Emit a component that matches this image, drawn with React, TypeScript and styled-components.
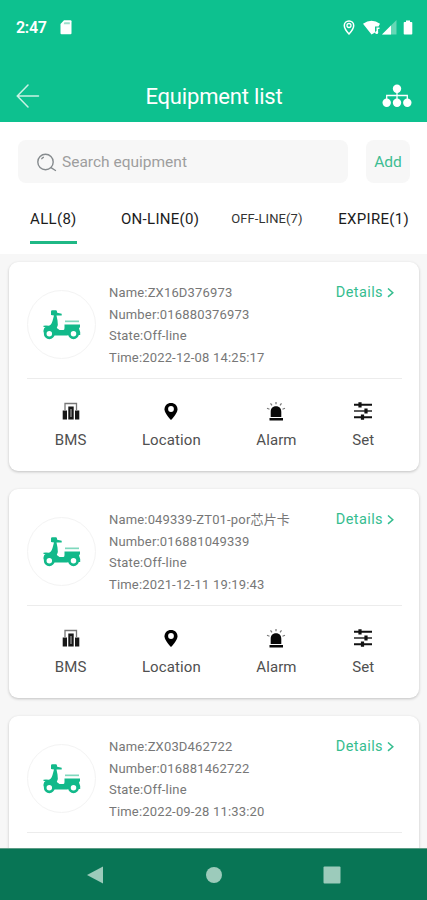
import React from "react";
import styled, { createGlobalStyle } from "styled-components";

const Global = createGlobalStyle`
  * { box-sizing: border-box; }
  html, body { margin: 0; padding: 0; overflow: hidden; }
  body { font-family: Roboto, "Noto Sans CJK SC", sans-serif; background: #f7f7f7; }
  svg { display: block; flex: none; }
  button { font: inherit; border: 0; padding: 0; background: none; }
`;

const Screen = styled.div`
  width: 427px;
  height: 900px;
  display: flex;
  flex-direction: column;
  overflow: hidden;
  background: #f7f7f7;
`;

const Header = styled.header`
  flex: none;
  height: 122px;
  background: #0dc18f;
  color: #fff;
  box-shadow: 0 1px 1px #b9d9ce;
`;

const StatusBar = styled.div`
  height: 55px;
  padding: 0 14px 0 16px;
  display: flex;
  align-items: center;
`;

const Clock = styled.span`
  width: 44px;
  font-size: 16px;
  font-weight: 600;
  line-height: 20px;
  letter-spacing: -0.3px;
  padding-top: 1px;
`;

const StatusIcons = styled.div`
  margin-left: auto;
  display: flex;
  align-items: center;
`;

const TitleBar = styled.div`
  height: 67px;
  padding: 14px 15px 0 16px;
  display: flex;
  align-items: center;
  justify-content: space-between;
`;

const Title = styled.h1`
  margin: 0;
  padding-top: 3px;
  font-size: 22px;
  font-weight: 400;
  line-height: 30px;
  letter-spacing: -0.18px;
`;

const Filters = styled.section`
  flex: none;
  height: 132px;
  padding-top: 18px;
  background: #fff;
`;

const SearchRow = styled.div`
  display: flex;
  gap: 18px;
  padding: 0 17px 0 18px;
  height: 43px;
`;

const SearchBox = styled.div`
  width: 330px;
  border-radius: 8px;
  background: #f7f7f7;
  display: flex;
  align-items: center;
  gap: 5px;
  padding-left: 18px;
  padding-top: 1px;
  font-size: 15.5px;
  color: #9e9e9e;
`;

const AddButton = styled.button`
  width: 44px;
  padding-top: 1px;
  border-radius: 8px;
  background: #f7f7f7;
  color: #3dbd92;
  font-size: 15.5px;
`;

const Tabs = styled.nav`
  display: grid;
  grid-template-columns: repeat(4, 1fr);
  height: 61px;
  padding-top: 25px;
`;

const Tab = styled.div<{ $active?: boolean; $small?: boolean }>`
  justify-self: center;
  height: 36px;
  line-height: 22px;
  font-size: ${(p) => (p.$small ? 13 : 15)}px;
  font-weight: ${(p) => (p.$small ? 400 : 450)};
  letter-spacing: ${(p) => (p.$small ? 0.1 : 0.3)}px;
  color: ${(p) => (p.$small ? "#333" : "#1c1c1c")};
  border-bottom: 3px solid ${(p) => (p.$active ? "#1fb885" : "transparent")};
  white-space: nowrap;
`;

const List = styled.main`
  flex: 1;
  min-height: 0;
  overflow: hidden;
  padding: 8px 8px 0 9px;
  display: flex;
  flex-direction: column;
  gap: 18px;
`;

const Card = styled.article`
  flex: none;
  height: 209px;
  padding: 0 17px 0 18px;
  background: #fff;
  border-radius: 9px;
  box-shadow: 0 1px 3px rgba(0, 0, 0, 0.22);
`;

const Summary = styled.div`
  display: flex;
  height: 117px;
  border-bottom: 1px solid #ececec;
  padding-top: 20px;
`;

const Avatar = styled.div`
  width: 69px;
  height: 69px;
  margin-top: 8px;
  border: 1px solid #f3f3f3;
  border-radius: 50%;
  display: flex;
  align-items: center;
  justify-content: center;
`;

const Facts = styled.div`
  margin-left: 13px;
  font-size: 13px;
  color: #777;
`;

const Fact = styled.div`
  height: 21.7px;
  line-height: 21.7px;
  letter-spacing: 0.17px;
  white-space: nowrap;
`;

const Details = styled.a`
  margin-left: auto;
  margin-right: 8px;
  height: 21px;
  display: flex;
  align-items: center;
  gap: 4px;
  font-size: 14.5px;
  letter-spacing: 0.4px;
  color: #35bd8f;
`;

const Actions = styled.div`
  display: flex;
  justify-content: space-around;
  padding-top: 22px;
`;

const Action = styled.div`
  display: flex;
  flex-direction: column;
  align-items: center;
  gap: 9px;
  font-size: 15px;
  line-height: 20px;
  letter-spacing: 0.1px;
  color: #505050;
`;

const NavBar = styled.footer`
  flex: none;
  height: 52px;
  border-top: 1px solid #5d9c85;
  background: #087555;
  display: flex;
  align-items: center;
  justify-content: space-between;
  padding: 0 86px;
`;

const BackArrow = () => (
  <svg width="30" height="24" viewBox="0 0 30 24" fill="none" stroke="#c9f2e4" strokeWidth="1.5" strokeLinecap="round">
    <path d="M12 1 1.3 12 12 23M1.5 12H22.5" />
  </svg>
);

const Org = () => (
  <svg width="30" height="24" viewBox="0 0 30 24" fill="#fff">
    <path d="M15 5v13M4.700 17v-5.500h20.600V17" fill="none" stroke="#fff" strokeWidth="1.3" />
    <circle cx="15" cy="4.700" r="4.2" />
    <circle cx="4.700" cy="18.7" r="4.2" />
    <circle cx="15" cy="18.7" r="4.2" />
    <circle cx="25.300" cy="18.7" r="4.2" />
  </svg>
);

const SdCard = () => (
  <svg width="12" height="15" viewBox="0 0 12 15">
    <path d="M4 .3h6.500q1 0 1 1v12q0 1-1 1h-9q-1 0-1-1V4z" fill="#fff" />
    <path d="M4.3 2.2h5.5v2H3.7z" fill="#9adfca" />
  </svg>
);

const StatusGlyphs = () => (
  <svg width="70" height="16" viewBox="0 0 70 16">
    <path d="M6 1C3.3 1 1.3 3 1.3 5.5 1.3 9 6 14 6 14s4.700-5 4.700-8.500C10.700 3 8.700 1 6 1Z" fill="none" stroke="#fff" strokeWidth="1.500" />
    <circle cx="6" cy="5.500" r="2" fill="none" stroke="#fff" strokeWidth="1.300" />
    <path d="M20 3.700Q28.500-2 37 3.700L35.500 6.500H32v6L28.500 14.500z" fill="#fff" />
    <path d="M34.300 12V8.300H36.500" fill="none" stroke="#fff" strokeWidth="1.600" />
    <circle cx="33.700" cy="12.500" r="1.500" fill="#fff" />
    <path d="M53.500 0v14.500H39z" fill="#65d8b6" />
    <path d="M48 5.500V14.500h-9z" fill="#fff" />
    <path d="M61.500 2H63V.5h4V2h1.500q.8 0 .8.800V13.700q0 .8-.8.800h-7q-.8 0-.8-.800V2.800q0-.8.800-.800z" fill="#fff" />
  </svg>
);

const SearchIcon = () => (
  <svg width="21" height="19" viewBox="0 0 21 19" fill="none" stroke="#868b8e" strokeWidth="1.400" strokeLinecap="round">
    <circle cx="9.500" cy="9" r="7.700" />
    <path d="M15 14.700 19.500 17.500M5.800 5.700Q6.400 4.800 7.300 4.300" />
  </svg>
);

const Scooter = () => (
  <svg width="38" height="30" viewBox="0 0 38 30" fill="#12b98a">
    <path d="M8 1.500Q8 .3 9.300.3H13Q14 .3 14.200 2.700L18.700 3.700V5.500H13.500L14.500 10.500Q15.500 15 13.800 18L16.500 20H20.500Q21.500 20 21.500 18V14.500H37V17L36 18.500 37.200 22V25H26L24 25.500H11L10 22.500H.5V20.500Q.7 17.800 2.500 17.300L.5 17V15.700Q3 15.500 5.700 15.700 8.500 15 9.500 11L11 5.500 8 5z" />
    <path d="M22 10.500H36V12.200H22z" fill="#7fd8bd" />
    <circle cx="6.300" cy="23.700" r="4.100" fill="#fff" stroke="#12b98a" strokeWidth="2.700" />
    <circle cx="30.500" cy="23.700" r="4.100" fill="#fff" stroke="#12b98a" strokeWidth="2.700" />
  </svg>
);

const Chevron = () => (
  <svg width="7" height="10" viewBox="0 0 7 10" fill="none" stroke="#35bd8f" strokeWidth="1.500">
    <path d="M1 .5 5.800 4.700 1 8.900" />
  </svg>
);

const BmsIcon = () => (
  <svg width="18" height="20" viewBox="0 0 18 20">
    <path d="M3 9V2.500H14.500V9" fill="none" stroke="#777" strokeWidth="1.300" />
    <path d="M.7 9.500H5V18.500H.7zM6.300 5.500H11.700V18.500H6.300zM13 9.500H17.300V18.500H13z" fill="#181818" />
    <path d="M9 8V16" stroke="#999" strokeWidth="1.300" />
  </svg>
);

const LocationIcon = () => (
  <svg width="18" height="20" viewBox="0 0 18 20">
    <path d="M9 2C5.200 2 2.500 4.700 2.500 8.200 2.500 12.500 9 19 9 19s6.500-6.500 6.500-10.800C15.500 4.700 12.800 2 9 2Z" />
    <circle cx="9" cy="8" r="2.900" fill="#fff" />
  </svg>
);

const AlarmIcon = () => (
  <svg width="20" height="20" viewBox="0 0 20 20">
    <path d="M4.700 16V10.700C4.700 3.500 15.300 3.500 15.300 10.700V16zM3.500 17H17V19.500H3.500z" fill="#080808" />
    <path d="M10 1V3.200M4.500 2.300 6 4.300M15.500 2.300 14 4.300M1 7.300 3.500 8.200M19 7.300 16.500 8.200" stroke="#777" strokeWidth="1.200" />
  </svg>
);

const SetIcon = () => (
  <svg width="20" height="20" viewBox="0 0 20 20" stroke="#111">
    <path d="M1 3.800H19M1 16.200H19" strokeWidth="1.900" />
    <path d="M1 10H19" stroke="#555" strokeWidth="1.900" />
    <path d="M7 1.200V6.400M13 7.400V12.600M9.500 13.600V18.800" strokeWidth="3.200" />
  </svg>
);

const actions = [
  { label: "BMS", Icon: BmsIcon },
  { label: "Location", Icon: LocationIcon },
  { label: "Alarm", Icon: AlarmIcon },
  { label: "Set", Icon: SetIcon },
];

const devices = [
  { name: "ZX16D376973", number: "016880376973", time: "2022-12-08 14:25:17", showActions: true },
  { name: "049339-ZT01-por芯片卡", number: "016881049339", time: "2021-12-11 19:19:43", showActions: true },
  { name: "ZX03D462722", number: "016881462722", time: "2022-09-28 11:33:20", showActions: false },
];

export default function App() {
  return (
    <Screen>
      <Global />
      <Header>
        <StatusBar>
          <Clock>2:47</Clock>
          <SdCard />
          <StatusIcons>
            <StatusGlyphs />
          </StatusIcons>
        </StatusBar>
        <TitleBar>
          <BackArrow />
          <Title>Equipment list</Title>
          <Org />
        </TitleBar>
      </Header>
      <Filters>
        <SearchRow>
          <SearchBox>
            <SearchIcon />
            Search equipment
          </SearchBox>
          <AddButton>Add</AddButton>
        </SearchRow>
        <Tabs>
          <Tab $active>ALL(8)</Tab>
          <Tab>ON-LINE(0)</Tab>
          <Tab $small>OFF-LINE(7)</Tab>
          <Tab>EXPIRE(1)</Tab>
        </Tabs>
      </Filters>
      <List>
        {devices.map((d) => (
          <Card key={d.number}>
            <Summary>
              <Avatar>
                <Scooter />
              </Avatar>
              <Facts>
                <Fact>Name:{d.name}</Fact>
                <Fact>Number:{d.number}</Fact>
                <Fact>State:Off-line</Fact>
                <Fact>Time:{d.time}</Fact>
              </Facts>
              <Details>
                Details
                <Chevron />
              </Details>
            </Summary>
            {d.showActions && (
              <Actions>
                {actions.map(({ label, Icon }) => (
                  <Action key={label}>
                    <Icon />
                    {label}
                  </Action>
                ))}
              </Actions>
            )}
          </Card>
        ))}
      </List>
      <NavBar>
        <svg width="18" height="18" viewBox="0 0 18 18">
          <path d="M1 9 17 .5v17z" fill="#9ccbbb" />
        </svg>
        <svg width="18" height="18" viewBox="0 0 18 18">
          <circle cx="9" cy="9" r="8" fill="#9ccbbb" />
        </svg>
        <svg width="18" height="18" viewBox="0 0 18 18">
          <rect x=".5" y=".5" width="17" height="17" rx="1" fill="#9ccbbb" />
        </svg>
      </NavBar>
    </Screen>
  );
}
